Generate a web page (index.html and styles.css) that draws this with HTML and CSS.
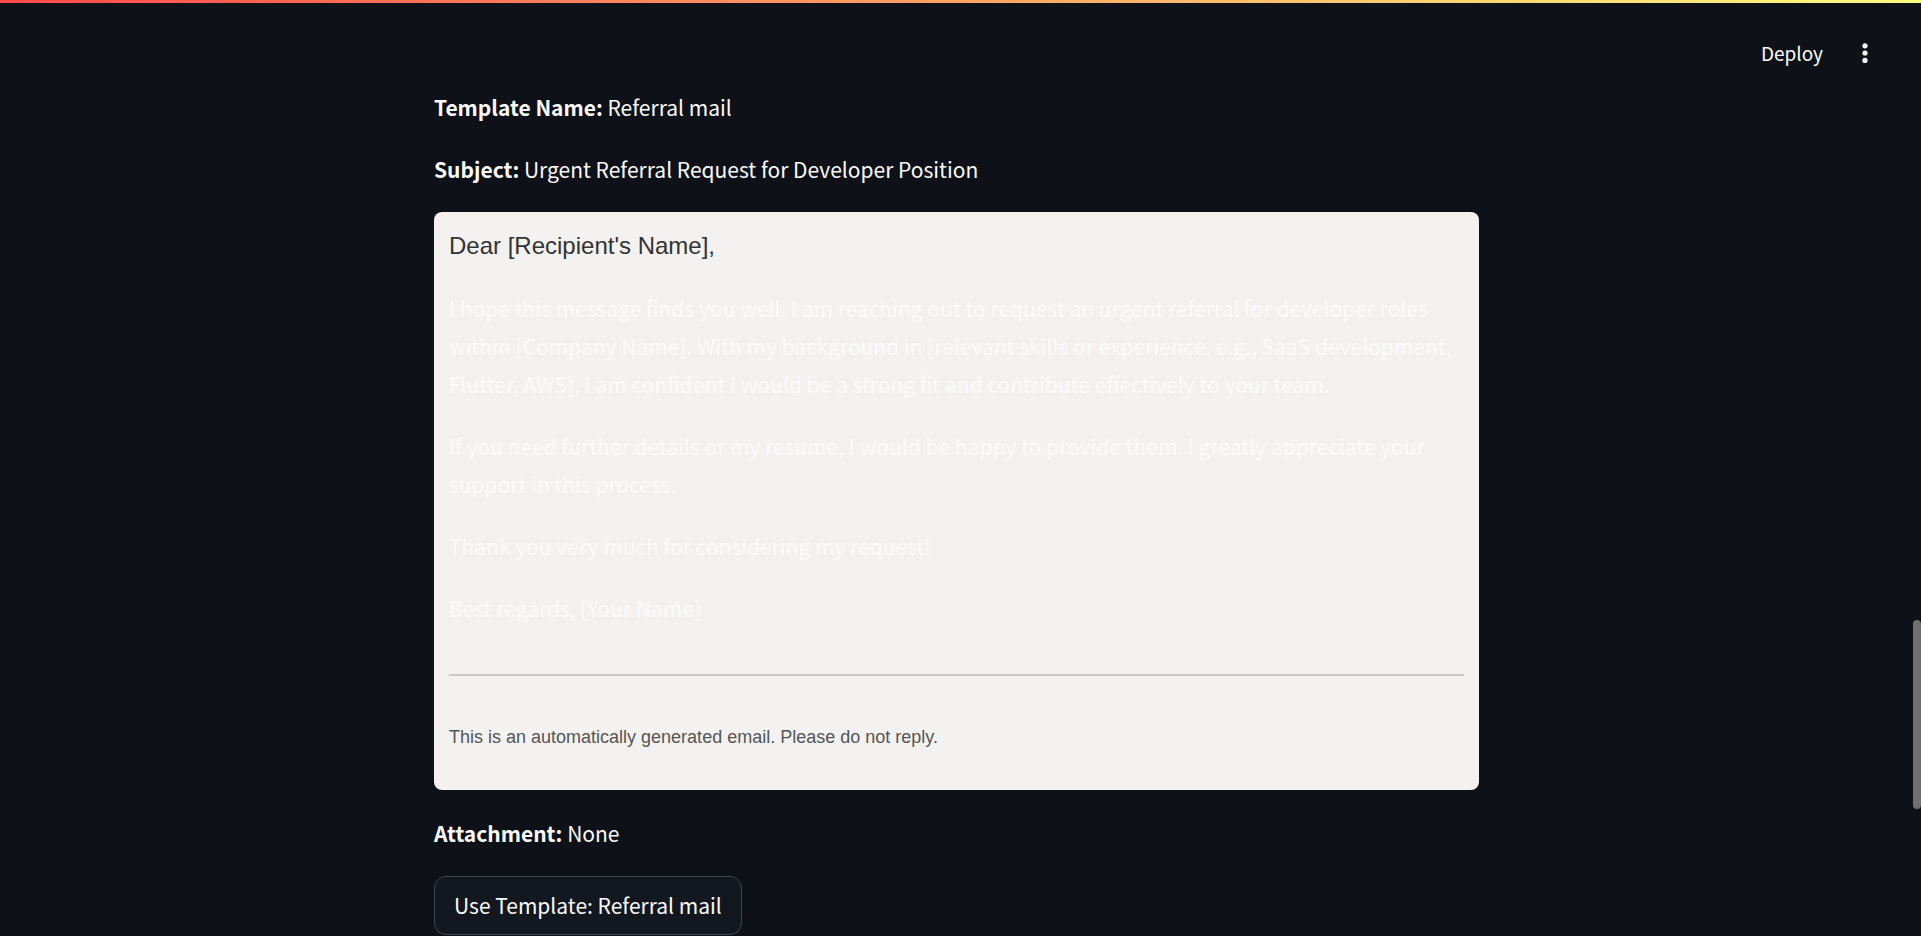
FILE: index.html
```html
<!DOCTYPE html>
<html lang="en">
<head>
<meta charset="utf-8">
<title>Email Templates</title>
<link rel="stylesheet" href="styles.css">
</head>
<body>
<div class="decoration"></div>
<header class="toolbar">
  <button class="deploy" type="button">Deploy</button>
  <button class="menu" type="button" aria-label="Main menu">
    <svg width="24" height="24" viewBox="0 0 24 24" fill="currentColor" aria-hidden="true"><circle cx="12" cy="4.8" r="2.6"/><circle cx="12" cy="12" r="2.6"/><circle cx="12" cy="19.4" r="2.6"/></svg>
  </button>
</header>
<div class="scroll-thumb" aria-hidden="true"></div>
<main class="block">
  <p><strong>Template Name:</strong> Referral mail</p>
  <p><strong>Subject:</strong> Urgent Referral Request for Developer Position</p>
  <article class="mail">
    <p class="greeting">Dear [Recipient's Name],</p>
    <p>I hope this message finds you well. I am reaching out to request an urgent referral for developer roles within [Company Name]. With my background in [relevant skills or experience, e.g., SaaS development, Flutter, AWS], I am confident I would be a strong fit and contribute effectively to your team.</p>
    <p>If you need further details or my resume, I would be happy to provide them. I greatly appreciate your support in this process.</p>
    <p>Thank you very much for considering my request!</p>
    <p>Best regards, [Your Name]</p>
    <hr>
    <p class="footnote">This is an automatically generated email. Please do not reply.</p>
  </article>
  <p><strong>Attachment:</strong> None</p>
  <button class="use" type="button">Use Template: Referral mail</button>
</main>
</body>
</html>
```
FILE: styles.css
```css
* { box-sizing: border-box; }
html { height: 100%; }
body {
  height: 100%;
  margin: 0;
  overflow: hidden;
  background: #0e1117;
  color: #fafafa;
  font-family: "Noto Sans CJK JP", "Noto Sans", sans-serif;
  font-size: 21px;
  line-height: 38px;
}
p { margin: 0; }
button { font: inherit; color: inherit; cursor: pointer; }
.decoration {
  height: 3px;
  background: linear-gradient(90deg, #ff4b4b, #fffd80);
}
.toolbar {
  display: flex;
  justify-content: flex-end;
  align-items: center;
  gap: 30px;
  height: 85px;
  padding: 15px 44px 0 0;
}
.deploy, .menu { padding: 0; border: 0; background: none; }
.deploy { font-size: 19px; }
.menu { display: flex; }
.scroll-thumb {
  position: fixed;
  top: 620px;
  right: 0;
  width: 8px;
  height: 189px;
  border-radius: 4px;
  background: #6e6f72;
}
.block {
  display: flex;
  flex-direction: column;
  align-items: flex-start;
  gap: 24px;
  max-width: 1053px;
  margin: 0 auto;
  padding-right: 8px;
}
.mail {
  display: flex;
  flex-direction: column;
  gap: 24px;
  width: 100%;
  padding: 15px 15px 34px;
  border-radius: 8px;
  background: #f3f2f0;
}
.greeting, .footnote { font-family: "Liberation Sans", Arial, sans-serif; }
.greeting { color: #333; font-size: 24px; }
.footnote { color: #555; font-size: 18px; }
hr {
  width: 100%;
  margin: 23px 0 18px;
  border: 0;
  border-top: 2px solid #cdccca;
}
.use {
  padding: 9px 19px 10px;
  border: 1px solid #41444c;
  border-radius: 12px;
  background: #131720;
}
```
